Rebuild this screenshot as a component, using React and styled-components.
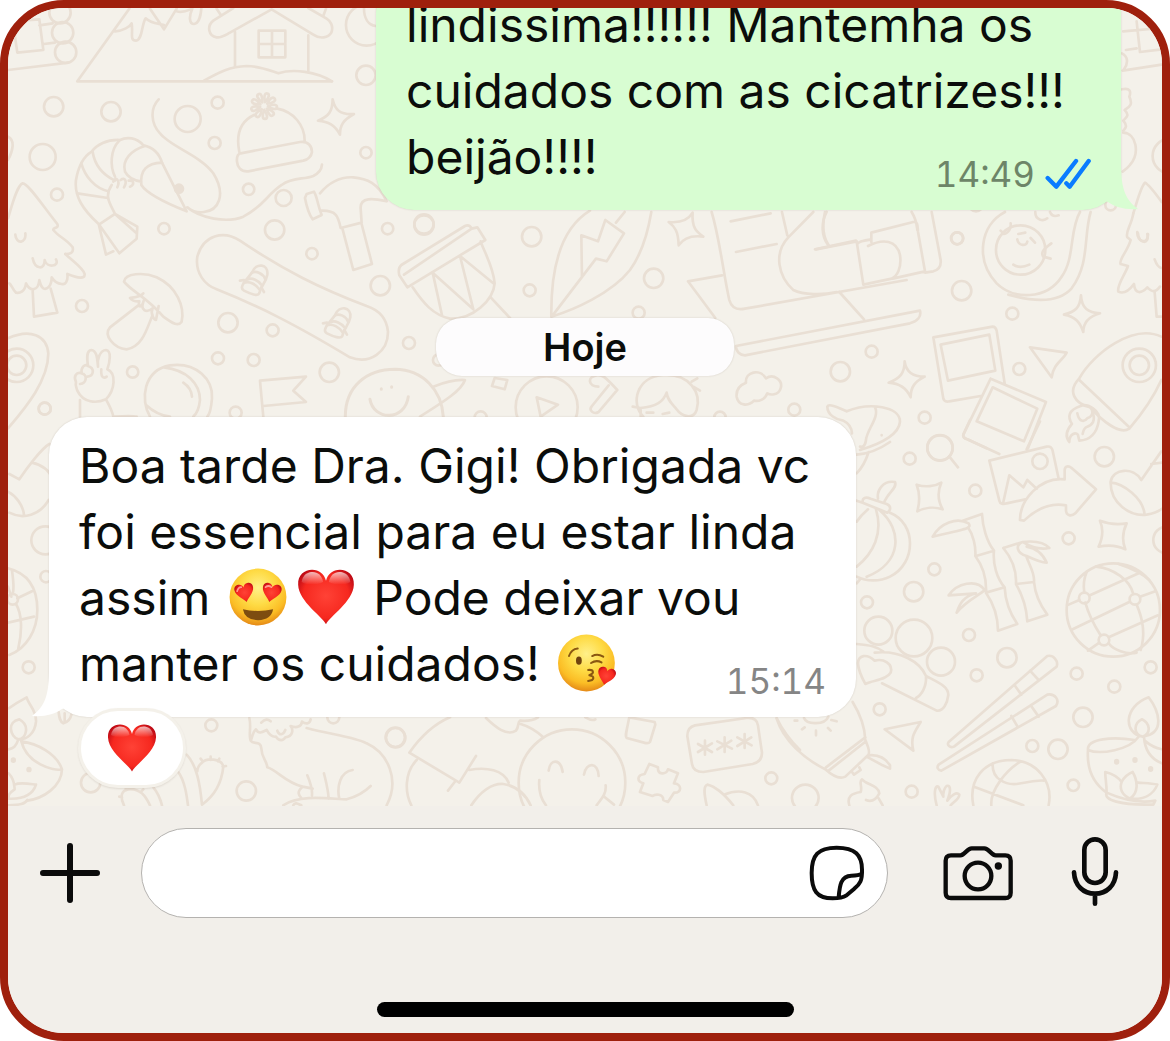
import React from 'react'
import styled, { createGlobalStyle } from 'styled-components'

const GlobalStyle = createGlobalStyle`
  * {
    box-sizing: border-box;
  }
  body {
    margin: 0;
    background: #fff;
    font-family: Inter, "Liberation Sans", sans-serif;
    color: #0b0d0b;
  }
`
const Phone = styled.main`
  display: flex;
  flex-direction: column;
  width: 100%;
  height: 100vh;
  overflow: hidden;
  border: 8px solid #9f200d;
  border-radius: 64px;
  background: #f2efea;
`
const Chat = styled.section`
  position: relative;
  flex: 1;
  min-height: 0;
  display: flex;
  flex-direction: column;
  justify-content: flex-end;
  overflow: hidden;
  padding: 0 41px 18px;
  background: #f4f1ea;
`
const Wallpaper = styled.svg`
  position: absolute;
  top: 0;
  left: 0;
  width: 100%;
  height: 100%;
  fill: none;
  stroke: #e9dfd4;
  stroke-width: 8;
  stroke-linecap: round;
  stroke-linejoin: round;
`
const Bubble = styled.article`
  position: relative;
  display: grid;
  flex-shrink: 0;
  width: 100%;
  max-width: ${(props) => props.$sent ? '745px' : '807px'};
  align-self: ${(props) => props.$sent ? 'flex-end' : 'flex-start'};
  padding: 16px 30px 20px;
  border-radius: 38px;
  background: ${(props) => props.$sent ? '#d8fdd2' : '#fff'};
  box-shadow: 0 0 2px rgba(80, 60, 40, 0.2);
`
const TailShape = styled.svg`
  position: absolute;
  bottom: 0;
  ${(props) => props.$sent ? 'right: -17px;' : 'left: -17px;'}
  width: 44px;
  height: 48px;
  fill: ${(props) => props.$sent ? '#d8fdd2' : '#fff'};
  transform: ${(props) => props.$sent ? 'none' : 'scaleX(-1)'};
`
const Text = styled.p`
  grid-area: 1 / 1;
  margin: 0;
  font-size: 48px;
  line-height: 66px;
`
const Meta = styled.div`
  grid-area: 1 / 1;
  align-self: end;
  justify-self: end;
  display: flex;
  align-items: center;
  gap: 10px;
  height: 32px;
  font-size: 35px;
  font-variant-numeric: tabular-nums;
  line-height: 32px;
  color: ${(props) => props.$sent ? '#6d8568' : '#858585'};
`
const DayLabel = styled.div`
  position: relative;
  flex-shrink: 0;
  align-self: center;
  width: 298px;
  margin: 108px 0 41px;
  border-radius: 26px;
  background: #fdfcfd;
  box-shadow: 0 0 2px rgba(80, 60, 40, 0.2);
  text-align: center;
  font-size: 38px;
  font-weight: 600;
  line-height: 58px;
`
const Reaction = styled.button`
  position: relative;
  display: flex;
  flex-shrink: 0;
  align-items: center;
  justify-content: center;
  width: 108px;
  height: 80px;
  margin: -9px 0 0 29px;
  padding: 0;
  border: 3px solid #f4f1ea;
  border-radius: 40px;
  background: #fff;
  box-shadow: 0 1px 2px rgba(80, 60, 40, 0.12);
`
const Emoji = styled.svg`
  width: ${(props) => props.$size || 58}px;
  height: ${(props) => props.$size || 58}px;
  margin: ${(props) => props.$size ? '0' : '0 5px'};
  vertical-align: ${(props) => props.$size ? 'middle' : '-11px'};
`
const Composer = styled.form`
  display: flex;
  flex-direction: column;
  align-items: center;
  padding: 22px 0 16px;
  background: #f2efea;
`
const ComposerRow = styled.div`
  display: flex;
  align-items: center;
  gap: 41px;
  width: 100%;
  margin-bottom: 84px;
  padding: 0 42px 0 32px;
`
const Field = styled.div`
  display: flex;
  flex: 1;
  align-items: center;
  min-width: 0;
  height: 90px;
  padding: 0 21px 0 32px;
  border: 1px solid #b4b2af;
  border-radius: 50px;
  background: #fff;
`
const Input = styled.input`
  flex: 1;
  min-width: 0;
  height: 66px;
  border: 0;
  outline: 0;
  background: transparent;
  font: inherit;
  font-size: 48px;
`
const Tools = styled.div`
  display: flex;
  align-items: center;
  gap: 56px;
  padding-left: 13px;
`
const IconButton = styled.button`
  display: flex;
  padding: 0;
  border: 0;
  background: none;
  color: #0b0b0b;
`
const Icon = styled.svg`
  width: ${(props) => props.$w}px;
  height: ${(props) => props.$h}px;
  fill: none;
  stroke: currentColor;
  stroke-linecap: round;
  stroke-linejoin: round;
`
const HomeBar = styled.div`
  width: 417px;
  max-width: 60%;
  height: 15px;
  border-radius: 8px;
  background: #000;
`

// wallpaper pieces are drawn three times their size
const Patch = ({ x, y, dots = [], children }) => (
  <g transform={`translate(${x} ${y}) scale(0.3333)`}>
    {dots.map(([cx, cy, r]) => <circle key={`${cx}-${cy}-${r}`} cx={cx} cy={cy} r={r} />)}
    {children}
  </g>
)

const Binding = ({ x, y }) => (
  <g transform={`translate(${x} ${y})`}>
    <path d="M8 24C20 -8 58 -2 54 30C50 54 34 64 30 86C26 96 4 88 -16 78C-26 72 -22 64 -16 54Z" />
    <path d="M8 24C20 18 42 26 48 44M-4 44C8 38 28 48 36 60M-16 54C2 48 20 60 30 74M-28 48L-16 46M36 68L44 82" />
  </g>
)

const Doodles = () => (
  <Wallpaper viewBox="8 8 1154 798" preserveAspectRatio="xMidYMin slice" aria-hidden="true">
    <Patch
      x={0}
      y={0}
      dots={[
        [180, 38, 32], [188, 98, 32], [197, 157, 32], [1100, 75, 62], [1098, 226, 29],
        [161, 320, 29], [333, 335, 29], [563, 357, 39], [653, 308, 18], [644, 429, 18],
        [128, 471, 39], [171, 584, 18], [492, 686, 17], [746, 568, 17], [851, 594, 24],
        [824, 690, 29], [936, 761, 17], [1098, 458, 17], [1163, 686, 17]
      ]}
    >
      <path d="M24 64L118 58L130 150L52 158L42 90M118 76L158 70M132 132L165 128M24 210L205 188" />
      <path d="M388 26L232 244H996M450 26L492 88L530 26M345 94C370 92 390 80 395 70C400 100 388 122 408 122C428 120 425 70 437 55C455 72 475 70 492 75M530 34C550 40 562 32 577 26C566 50 568 72 582 72C598 70 603 40 604 26" />
      <path d="M705 96V200M925 106V212M650 26L662 44M978 26L970 48M700 24L640 62C620 78 625 108 650 112C665 114 675 106 690 98L815 28L940 104C960 118 985 114 994 98C1002 78 990 62 980 56L925 24" />
      <path d="M776 92H856V172H776ZM816 92V172M776 132H856M612 242C660 215 690 200 740 198C780 198 810 212 835 220C880 205 950 215 996 244M1092 24C1092 55 1105 75 1127 78" />
      <path d="M476 298C450 325 452 370 480 400C510 440 600 465 640 520C680 585 655 632 612 636C590 640 570 630 562 622C600 655 680 670 730 650C790 620 800 585 845 555C880 530 910 540 940 528C960 518 965 508 966 494" />
      <path d="M718 456C705 390 730 360 762 345M832 326C880 335 915 375 914 424M722 460L900 426C925 422 936 440 936 456C934 470 925 478 910 482L745 514C722 516 712 500 711 484C710 470 714 462 722 460Z" />
      {[0, 40, 80, 120, 160, 200, 240, 280, 320].map((a) => (
        <path key={a} d="M792 306C783 290 784 279 792 279C800 279 801 290 792 306" transform={`rotate(${a + 15} 792 318)`} />
      ))}
      <path d="M998 298C1005 330 1020 345 1062 342C1030 360 1020 375 1020 404C1005 375 985 365 954 362C985 350 998 335 998 298Z" />
      <path d="M486 488C475 450 450 440 430 436C410 412 380 410 360 420C320 418 290 435 275 455C250 470 235 500 228 540C222 590 250 630 296 672L318 764L340 754M296 672L358 760L410 716L412 680L345 642M345 642L408 698M300 672L345 642C330 610 312 590 335 555" />
      <path d="M244 490C255 530 285 565 325 574M278 456C285 500 310 525 345 542M358 422C330 450 330 500 345 530M434 438C395 450 365 480 375 515C385 535 405 542 424 545M232 580L324 594M486 488C440 490 420 510 424 555C440 580 500 610 560 634L486 488M340 545C345 528 362 540 352 562M362 540C376 530 382 545 372 562M386 542C405 540 402 556 390 560" />
      <circle cx="537" cy="566" r="12" fill="#e9dfd4" />
      <path d="M960 580C985 550 1020 530 1060 532C1100 535 1135 550 1160 604C1120 595 1080 590 1082 625L1085 668L1022 684C1015 650 1010 630 962 632M920 582L942 575C952 590 950 605 965 645L938 658C925 640 918 610 915 594ZM1028 688L1060 810L1116 792L1085 672" />
      <path d="M24 655C35 620 50 558 68 550C85 550 130 620 172 672C178 688 158 680 160 690C178 712 200 718 218 742C222 760 210 762 196 762M46 704C48 735 80 730 76 700M24 410C45 420 40 450 24 480" />
    </Patch>

    <Patch
      x={0}
      y={220}
      dots={[
        [684, 308, 29], [818, 331, 18], [246, 258, 18], [1141, 197, 29], [1227, 369, 18],
        [654, 415, 18], [761, 420, 18], [988, 457, 29], [398, 456, 17], [134, 566, 18],
        [707, 578, 18], [1272, 12, 29], [50, 436, 50], [50, 436, 29], [1316, 420, 17]
      ]}
    >
      <path d="M196 102C220 125 250 145 254 162C255 178 235 175 202 162C205 185 195 195 185 192C165 190 160 180 155 172C155 200 140 210 130 205C122 200 120 188 118 180C115 215 90 215 78 190C75 215 60 220 48 218C38 210 35 195 28 190M98 212L102 290L172 278L152 206M98 115C105 150 135 150 134 120C140 145 180 140 168 118" />
      <path d="M372 185C375 160 430 155 470 172C530 200 555 260 545 305C535 320 520 312 490 290C440 230 395 215 372 185ZM418 254L330 322C310 345 340 385 380 388C430 380 442 320 458 285M430 220C420 232 400 232 390 234C398 244 405 245 418 244C412 262 425 268 432 240C418 272 440 280 458 265C450 280 462 300 468 300L476 258" />
      <path d="M720 62C670 30 610 45 592 110C585 160 615 195 650 208C780 260 880 310 1050 412C1110 435 1165 395 1164 335C1160 290 1130 268 1100 258C960 205 850 150 720 62Z" />
      <Binding x={748} y={134} />
      <Binding x={997} y={262} />
      <path d="M24 355C90 325 140 345 145 400C145 480 80 560 24 625" />
      <path d="M294 440C290 420 300 390 318 390C335 392 330 425 322 448C350 460 345 510 318 538C290 550 250 550 232 512C228 500 225 495 228 486C220 470 228 455 245 460C242 442 255 430 264 438C260 410 260 392 274 390C292 392 292 420 294 440M304 448C302 470 310 478 320 470M245 460C262 462 262 490 240 492M264 438C285 445 282 468 262 470M240 540V590M318 538C330 560 338 575 340 590C370 588 395 586 410 590" />
      <path d="M450 590C420 540 430 450 510 436C590 425 640 480 636 535C634 560 632 580 622 590M492 442C560 450 600 490 600 540C598 560 592 580 580 590M438 555C465 580 490 588 510 590M550 488C565 498 575 515 576 530" />
      <path d="M790 590L780 482L918 470L880 512L918 546L790 558" />
      <path d="M1036 590C1036 500 1100 448 1185 448C1270 450 1325 510 1330 590M1110 538C1120 602 1215 605 1225 530M1144 506V508M1175 500V502" strokeWidth="9" />
      <path d="M1300 500C1330 488 1370 478 1395 480C1385 510 1340 540 1260 590" />
    </Patch>

    <Patch
      x={430}
      y={200}
      dots={[
        [305, 110, 29], [299, 271, 18], [671, 235, 29], [626, 338, 18], [350, 622, 93],
        [1093, 629, 18], [152, 652, 18], [870, 652, 17], [-18, 75, 29]
      ]}
    >
      <path d="M-86 195L105 78C115 74 122 80 125 86L142 82L166 120L-68 262L-92 226C-96 210 -94 202 -86 195ZM-78 224L125 86M-52 262C-20 310 10 345 60 356C130 358 190 300 194 250C190 200 160 150 152 124M8 218L36 346M8 218L130 328L90 168L190 250M182 292L240 354" />
      <path d="M480 32C400 80 362 190 364 350C430 330 545 280 600 210C640 155 655 90 664 36M368 346L498 176L530 184L582 100L526 60L504 124L454 106L456 232M558 68L584 36" />
      <path d="M788 38C785 85 800 95 820 110C785 105 760 115 746 136C745 95 735 80 716 66C755 70 775 60 788 38Z" />
      <path d="M845 36C870 120 880 220 898 300C905 325 925 330 945 326L1430 240M902 64L1022 40M918 156L1040 132M876 226L774 244L856 354M1056 36L1072 106M1150 36L1075 112C1030 160 1045 230 1090 270C1120 285 1180 285 1220 276M918 438L1470 332C1475 350 1462 364 1440 370L945 466C930 466 918 455 918 438ZM1185 36C1175 80 1180 110 1195 134M1155 148L1278 122" />
      <path d="M320 592L384 614L332 650ZM194 534L232 540L224 568L186 558ZM505 560C475 560 470 530 500 526C515 522 525 530 562 570L506 636C490 645 475 630 486 618L536 556" />
      <path d="M640 650C600 610 620 530 700 525C780 520 815 580 800 630C790 660 755 650 740 628C725 610 712 600 710 578C700 605 680 620 632 624M608 620L632 624V650M650 638H670M698 642L718 638M785 545L802 535M790 560L810 572" />
      <path d="M948 548C945 515 990 505 1008 535C1030 520 1060 540 1052 565C1045 588 1020 585 1012 580C1005 600 985 605 972 602C955 620 925 618 920 590C918 570 930 555 948 548Z" />
    </Patch>

    <Patch
      x={770}
      y={0}
      dots={[[1200, 468, 52], [562, 715, 18], [1022, 615, 16], [618, 612, 22]]}
    >
      <path d="M1060 94L1175 84M1100 64L1110 156L1175 148M1068 150L1100 145M1058 212L1175 194M1056 160C1075 170 1075 190 1062 208M1056 268C1080 262 1084 275 1078 290C1090 315 1078 320 1064 330C1080 348 1070 350 1060 362C1075 380 1065 385 1060 392M1060 398C1100 400 1110 460 1080 495C1072 505 1065 510 1058 515" />
      <path d="M1090 640C1100 610 1112 560 1125 548C1138 555 1160 585 1175 606M1102 696C1100 728 1136 735 1134 702" />
    </Patch>

    <Patch
      x={800}
      y={200}
      dots={[
        [471, 115, 18], [485, 272, 29], [637, 341, 18], [215, 455, 18], [121, 515, 29],
        [658, 507, 18], [374, 653, 18], [1018, 496, 50], [1018, 496, 29], [420, 743, 38],
        [662, 150, 74]
      ]}
    >
      <path d="M80 36C62 70 65 110 84 134M48 148L170 124L190 254M172 132C175 124 200 120 214 118M214 126V98L340 66C355 64 352 78 354 95L375 214L278 236M335 36C350 60 350 75 352 90M204 138C250 115 290 120 300 165C306 205 290 230 275 236L190 254M395 36L422 180C424 200 415 210 400 214L375 218M118 276L192 358" />
      <path d="M615 36C540 75 525 180 590 250C640 300 740 300 785 230C825 175 808 90 840 36M872 36C850 110 870 190 815 265C775 310 700 305 625 284M706 36C705 60 730 65 742 55M750 36C755 48 765 50 776 46M652 118C655 138 680 140 682 125M655 102L676 98M692 114L705 128M640 194C655 204 675 200 688 194M602 92L612 102C625 100 634 86 632 70M754 130C735 145 720 155 730 170L752 176" />
      <path d="M843 286C845 325 865 338 900 340C865 350 850 370 850 396C840 365 825 350 792 344C825 335 840 325 843 286ZM314 484C318 515 340 530 374 530C345 545 332 560 332 592C320 565 300 550 266 548C300 535 314 520 314 484Z" />
      <path d="M1000 40C995 75 975 95 982 112L992 120C985 150 955 180 962 192L984 198C975 225 950 255 955 275C970 282 985 275 1002 252C1005 285 1025 280 1042 262C1055 275 1065 280 1080 260M1064 276L1070 350H1084M1064 178C1070 195 1075 202 1084 204M1014 100C1015 132 1050 135 1042 102" />
      <path d="M590 392C588 385 585 380 578 380L400 412L430 596C432 604 440 606 448 604L542 588M590 392L614 550M422 434L568 404L586 512L444 542ZM572 536L738 606L684 745M572 536L490 704C490 712 495 716 502 718L560 745M578 562L712 626L672 724L530 664Z" />
      <path d="M690 442L800 458C790 480 760 490 755 532ZM1084 410C1000 370 880 460 838 535C800 575 825 610 870 622C910 665 960 705 988 686C1010 660 1055 605 1084 540M838 540L988 682" />
      <path d="M896 665C905 630 860 610 842 618C805 630 802 650 816 672C800 690 795 710 808 726C808 700 830 695 834 705L838 722C870 720 890 700 896 665ZM832 640C838 670 855 665 862 655C875 650 880 640 876 630C890 665 875 675 862 680C850 685 850 695 848 702" />
      <path d="M140 634C210 605 300 620 300 665C298 700 250 730 180 750M140 634C110 620 85 610 82 620C82 645 110 660 130 662C150 672 155 685 156 700M225 622C240 650 200 690 198 720C195 740 188 742 180 740M245 705V706" />
    </Patch>

    <Patch
      x={840}
      y={420}
      dots={[
        [300, 84, 38], [209, 116, 18], [406, 212, 18], [600, 124, 23], [793, 110, 29],
        [686, 355, 18], [283, 448, 18], [221, 515, 29], [81, 547, 18], [387, 645, 18],
        [501, 713, 29], [115, 632, 42], [222, 654, 55], [303, 725, 42], [410, 766, 18],
        [710, 761, 18], [932, 742, 18], [823, 800, 18], [119, 868, 18], [729, 892, 29],
        [577, 978, 18], [654, 988, 29], [700, 1096, 17], [215, 1115, 18], [820, 570, 140],
        [733, 534, 16], [885, 538, 16], [792, 660, 16], [980, 360, 40]
      ]}
    >
      <path d="M330 112L354 142M50 104C100 100 130 80 150 66M86 96C75 130 60 150 50 160M600 4L560 88M390 0L370 44C368 52 375 56 382 58L478 102" />
      <path d="M448 122L620 80C630 78 636 84 638 92L656 176M448 122L478 242C480 252 490 254 500 250L556 238M490 246L508 166L550 202L562 180L590 206" />
      <path d="M540 300C540 240 600 170 674 178V150C675 138 685 136 695 144L768 208L706 280C695 290 678 288 678 270V256C620 245 575 280 552 302Z" />
      <path d="M230 194C255 202 285 200 304 188C292 215 295 245 308 268C285 260 255 262 232 274C240 245 240 220 230 194ZM780 302C810 314 835 314 860 310C848 335 845 360 856 388C830 375 800 375 776 380C790 350 790 325 780 302Z" />
      <path d="M964 94L904 180C880 140 820 145 812 185C810 250 870 290 920 284C945 280 955 275 966 266M812 188C850 190 910 235 914 284M934 132L966 128" />
      <path d="M50 242L68 248C66 232 78 230 92 236L140 252C155 258 152 272 142 278L68 248M114 236C110 210 130 180 165 186C172 205 145 215 132 248M150 278C230 310 230 430 150 470C120 485 80 485 50 470M108 268C130 340 100 400 50 440M118 270C190 330 185 430 80 470M84 268C70 280 60 290 50 305M50 490L60 478" />
      <path d="M368 302L426 282C428 320 440 365 462 392C458 430 470 475 494 502C496 545 510 580 532 612L474 632C474 590 460 550 438 518C440 480 430 440 406 408C408 380 400 345 384 322M408 408L462 392M438 518L494 502M278 350C300 310 350 290 386 310C395 325 385 325 278 350ZM326 526C350 490 410 475 434 510C420 525 380 540 350 578C360 550 370 530 408 520L326 526" />
      <path d="M490 384L548 366C600 360 620 375 628 384C600 390 570 380 548 366C525 375 530 400 560 408C590 422 605 428 620 428C610 405 590 385 560 380M490 384C520 420 530 455 528 492C550 530 560 570 562 604L622 584C600 555 585 520 582 486C585 460 570 440 560 412M528 492L582 486" />
      <path d="M740 456C730 480 730 500 733 518M768 440C820 445 870 480 880 522M686 554L718 540M750 526L896 460M736 548C745 580 765 620 782 646M698 628L868 546M900 530L946 514M890 554C910 600 915 650 902 690M806 652L954 586M744 692L778 668M806 670C820 690 860 705 890 698M836 432C860 440 900 455 928 480" />
      <path d="M50 672C90 675 110 680 130 695M104 698C180 690 240 725 258 768C300 790 325 800 325 825C322 850 310 875 290 872L126 790M258 768C260 800 245 825 228 834M54 730C55 705 80 700 104 722C130 715 160 730 152 758C140 780 100 780 76 792C64 770 55 750 54 730Z" />
      <path d="M622 708C640 704 656 722 650 740L342 980C330 985 320 975 326 966ZM570 752L596 780M524 796L544 824M622 824C645 820 660 840 648 858L304 1052C292 1050 290 1042 296 1034ZM572 856L596 890M514 888L534 922" />
      <path d="M134 928L242 906C225 935 210 950 220 992ZM400 1156C385 1080 430 1020 515 1020C590 1022 640 1085 626 1156M402 1100L550 1156M458 1030C455 1080 500 1095 530 1092C570 1085 600 1080 612 1082M540 1026C500 1050 450 1110 454 1156" />
      <path d="M290 1156C280 1120 285 1095 295 1100L310 1130C308 1110 320 1090 328 1100C335 1115 325 1130 322 1142C335 1125 350 1115 358 1124C358 1138 340 1145 332 1156M28 1156C20 1130 35 1120 62 1116C68 1100 55 1085 66 1078C80 1095 115 1095 118 1120C105 1145 90 1145 78 1140M116 1135L128 1156" />
      <path d="M926 832C955 870 980 940 908 950C850 940 850 860 926 832ZM908 950C880 945 880 910 906 898C930 910 935 940 908 950M896 950C870 990 780 1005 744 990C740 955 820 950 884 960M912 950C915 1000 940 1020 966 1030M914 962C935 980 950 985 966 988M744 990C740 1050 760 1090 800 1118C790 1140 840 1156 940 1154L946 1142C900 1150 850 1140 800 1118C800 1090 795 1070 796 1056C820 1062 835 1072 845 1086C850 1075 865 1060 878 1056C895 1085 895 1120 870 1136C845 1125 838 1105 845 1086M894 1088C920 1090 935 1090 952 1094C940 1125 910 1140 870 1136" />
      <path d="M830 1024V1026M885 1019V1021M932 1046V1048" strokeWidth="16" />
    </Patch>

    <Patch
      x={0}
      y={400}
      dots={[[134, 26, 18], [136, 421, 42], [138, 530, 17], [86, 802, 18]]}
    >
      <path d="M148 132C125 145 80 205 58 238L28 222M96 188C130 195 150 215 160 240M24 275C45 285 70 315 72 346M28 338C70 360 120 345 146 300M24 505C85 520 112 565 112 630C112 690 80 745 28 765M36 512C40 540 42 570 38 582M52 595L96 574M24 560L34 590M48 612C65 640 68 690 55 745M24 668L102 650" />
      <circle cx="38" cy="598" r="16" />
    </Patch>

    <Patch
      x={0}
      y={680}
      dots={[[634, 136, 18], [272, 308, 29], [739, 333, 29], [1187, 173, 29], [1000, 112, 18]]}
    >
      <path d="M26 85C50 68 65 60 80 52C85 75 110 90 108 125C105 160 80 180 55 178C30 170 20 125 58 118C90 135 80 175 55 178C48 200 40 205 26 208M64 184C110 190 170 220 186 268C160 275 80 250 64 184ZM186 268C185 320 130 355 82 362M26 280C45 300 42 315 44 328C25 340 26 345 26 350M44 314C60 306 90 312 108 314C98 345 70 358 26 356M26 376C60 375 75 372 82 360M176 96C178 115 180 125 190 130C205 125 212 115 214 104M194 100V126" />
      <path d="M40 240V241M87 268V269" strokeWidth="16" />
      <path d="M372 376C355 340 370 325 400 328C430 335 440 355 450 376M358 350L366 352M376 322L380 330M400 318V326M430 328L424 334M460 322C475 340 482 360 486 376M535 276C555 305 560 345 564 376M560 224C590 255 600 310 606 374C640 350 665 310 670 260C665 235 620 232 604 250C595 258 592 265 592 274M602 236L608 244M632 230V240M658 236L654 244M668 260L678 258" />
      <path d="M748 114C755 140 745 165 752 182C760 195 782 180 784 205C785 235 800 240 802 262C830 270 860 310 908 320C890 335 895 345 905 355M752 182C760 165 755 160 768 148C775 165 790 155 800 150C808 165 815 172 828 170C838 185 850 182 856 172C880 170 880 148 872 138C890 145 905 140 906 125C920 135 930 130 932 118M784 128C795 115 805 118 812 124M832 152C838 168 850 165 856 150M920 144C1000 165 1060 170 1100 190C1165 220 1200 300 1160 376M908 320L938 326M922 286C930 305 938 325 936 346M972 280C978 305 985 330 986 356M1058 270C1020 275 1010 320 1018 356M850 376C900 340 1000 358 1040 358C1070 350 1090 340 1112 318M880 376C885 365 895 372 904 376" />
    </Patch>

    <Patch x={400} y={700} dots={[[516, 248, 160], [-14, 112, 29], [1114, 235, 18], [1216, 294, 40]]}>
      <path d="M150 52C95 75 55 120 28 158L178 248L228 168M164 246L144 272M50 180C12 220 15 280 34 316M208 210C260 200 310 210 326 248M214 316C240 275 275 250 310 252C350 258 375 280 392 316M258 54C285 80 320 110 348 92C358 80 352 66 360 62C385 64 405 58 414 52M362 72C390 80 415 98 430 112M556 52C570 60 580 62 586 58" />
      <path d="M446 212C450 175 482 175 488 216M552 224C558 185 595 185 596 228M418 240C415 275 425 300 438 316M617 256C620 285 600 300 590 316M610 288L642 314" />
      <path d="M688 52L764 66L766 74L750 126C745 132 740 130 732 128L680 114C675 108 678 100 688 52ZM885 76L1040 54C1062 52 1072 62 1074 76L1086 158C1086 178 1075 188 1058 192L910 216C886 216 878 205 876 192L862 108C862 90 868 80 885 76Z" />
      <path d="M915 122V164M894 132L936 156M936 130L894 156M974 112V156M952 124L996 146M994 122L952 148M1034 102V144M1012 112L1055 136M1054 112L1012 138" />
      <path d="M748 192L774 202C772 225 800 225 804 208L834 220L822 250C845 250 848 280 822 278L804 306L790 300C790 280 765 282 758 288L720 276L730 250C710 245 710 225 734 222ZM920 316C912 280 910 258 922 254C950 260 975 285 1000 316M972 284C1020 265 1060 275 1074 316M1130 54C1145 85 1170 120 1200 150" />
    </Patch>

    <Patch x={700} y={640}>
      <path d="M230 236C250 300 310 355 376 388C400 410 420 418 436 410L504 346M458 186C485 230 495 270 496 300C505 320 510 340 504 346M378 382L496 292M386 392L498 304M504 346C540 342 560 360 570 376V386L548 376L504 352M456 396L462 404L482 390L478 382M312 234C320 255 375 255 385 230M284 242H292M306 268L314 262M348 272V286M384 264L392 272M394 240L410 244" />
    </Patch>
  </Wallpaper>
)

const HEART = 'M50 97C44 84 3 58 2 29C1 12 13 3 26 3C38 3 47 10 50 22C53 10 62 3 74 3C87 3 99 12 98 29C97 58 56 84 50 97Z'

const Gradients = ({ id }) => (
  <defs>
    <radialGradient id={`${id}-face`} cx="50%" cy="34%" r="66%">
      <stop offset="0" stopColor="#fff08a" />
      <stop offset="0.45" stopColor="#fedb45" />
      <stop offset="0.78" stopColor="#fbbd25" />
      <stop offset="1" stopColor="#e58a17" />
    </radialGradient>
    <radialGradient id={`${id}-heart`} cx="50%" cy="48%" r="58%">
      <stop offset="0" stopColor="#ff4236" />
      <stop offset="0.7" stopColor="#f6281f" />
      <stop offset="1" stopColor="#bd0a15" />
    </radialGradient>
    <linearGradient id={`${id}-shine`} x1="0" y1="0" x2="0" y2="1">
      <stop offset="0" stopColor="#fff" stopOpacity="0.7" />
      <stop offset="1" stopColor="#fff" stopOpacity="0" />
    </linearGradient>
  </defs>
)

const HeartEmoji = ({ id, size }) => (
  <Emoji $size={size} viewBox="0 0 100 100" role="img" aria-label="❤️">
    <Gradients id={id} />
    <path d={HEART} fill={`url(#${id}-heart)`} />
    <path d="M8 24C10 11 19 7 27 7C36 7 43 13 45 24C32 30 18 30 8 24Z" fill={`url(#${id}-shine)`} />
    <path d="M55 24C57 13 64 7 73 7C81 7 90 11 92 24C82 30 68 30 55 24Z" fill={`url(#${id}-shine)`} />
  </Emoji>
)

const HeartEyes = () => (
  <Emoji viewBox="0 0 100 100" role="img" aria-label="😍">
    <Gradients id="eyes" />
    <circle cx="50" cy="50" r="49" fill="url(#eyes-face)" />
    <path d="M24 71Q50 77 76 71Q73 89 50 90Q27 89 24 71Z" fill="#7d4c10" />
    <path d={HEART} fill="url(#eyes-heart)" transform="translate(10 26) rotate(-12 17 17) scale(0.34)" />
    <path d={HEART} fill="url(#eyes-heart)" transform="translate(56 26) rotate(12 17 17) scale(0.34)" />
    <path d="M14 40Q16 33 21 33M63 33Q68 29 73 33" fill="none" stroke="#ff9a92" strokeWidth="3" strokeLinecap="round" />
  </Emoji>
)

const KissEmoji = () => (
  <Emoji viewBox="0 0 100 100" role="img" aria-label="😘">
    <Gradients id="kiss" />
    <circle cx="49" cy="50" r="49" fill="url(#kiss-face)" />
    <ellipse cx="36" cy="46" rx="5" ry="7" fill="#70430e" />
    <g fill="none" stroke="#8a5711" strokeWidth="3.5" strokeLinecap="round" strokeLinejoin="round">
      <path d="M19 38Q23 26 34 25M59 38Q68 33 78 39M57 50Q66 44 75 49" />
      <path d="M52 62C61 61 64 67 54 71C64 73 63 80 52 81" />
    </g>
    <path d={HEART} fill="url(#kiss-heart)" transform="translate(67 57) rotate(14 16 16) scale(0.32)" />
  </Emoji>
)

const Tail = ({ sent }) => (
  <TailShape $sent={sent} viewBox="0 0 44 48" aria-hidden="true">
    <path d="M6 0H27C27 24 30 37 44 47C31 48 21 45 14 40L0 36Z" />
  </TailShape>
)

const ReadTicks = () => (
  <Icon $w={46} $h={32} viewBox="0 0 138 96" color="#0a7cff" strokeWidth="13" role="img" aria-label="Lida">
    <path d="M8 60L34 86L93 9M64 76L74 86L131 9" />
  </Icon>
)

const App = () => (
  <>
    <GlobalStyle />
    <Phone>
      <Chat>
        <Doodles />
        <Bubble $sent>
          <Tail sent />
          <Text>
            lindissima!!!!!! Mantemha os<br />
            cuidados com as cicatrizes!!!<br />
            beijão!!!!
          </Text>
          <Meta $sent>
            <time>14:49</time>
            <ReadTicks />
          </Meta>
        </Bubble>
        <DayLabel>Hoje</DayLabel>
        <Bubble>
          <Tail />
          <Text>
            Boa tarde Dra. Gigi! Obrigada vc<br />
            foi essencial para eu estar linda<br />
            assim <HeartEyes /><HeartEmoji id="inline" /> Pode deixar vou<br />
            manter os cuidados! <KissEmoji />
          </Text>
          <Meta>
            <time>15:14</time>
          </Meta>
        </Bubble>
        <Reaction type="button" aria-label="Reação">
          <HeartEmoji id="reaction" size={50} />
        </Reaction>
      </Chat>
      <Composer onSubmit={(e) => e.preventDefault()}>
        <ComposerRow>
          <IconButton type="button" aria-label="Anexar">
            <Icon $w={60} $h={60} viewBox="0 0 60 60" strokeWidth="6">
              <path d="M30 3V57M3 30H57" />
            </Icon>
          </IconButton>
          <Field>
            <Input type="text" aria-label="Mensagem" />
            <IconButton type="button" aria-label="Figurinhas">
              <Icon $w={58} $h={58} viewBox="326 613 174 174" strokeWidth="12">
                <path d="M400 776C352 776 337 752 337 700C337 646 356 624 412 624C468 624 488 646 488 690C489 722 482 734 465 747L440 768C430 775 416 776 400 776ZM418 772C421 738 424 709 456 708C472 708 480 707 487 702" />
              </Icon>
            </IconButton>
          </Field>
          <Tools>
            <IconButton type="button" aria-label="Câmera">
              <Icon $w={72} $h={58} viewBox="727 611 216 174" strokeWidth="13">
                <path d="M754 645H782C796 645 802 624 816 624H854C868 624 874 645 888 645H917C928 645 933 651 933 661V757C933 768 928 773 917 773H754C743 773 738 768 738 757V661C738 651 743 645 754 645Z" />
                <circle cx="835" cy="707" r="40" />
                <circle cx="896" cy="677" r="11" fill="currentColor" stroke="none" />
              </Icon>
            </IconButton>
            <IconButton type="button" aria-label="Gravar áudio">
              <Icon $w={50} $h={72} viewBox="1110 590 150 216" strokeWidth="14">
                <rect x="1153" y="597" width="64" height="131" rx="32" />
                <path d="M1122 696C1124 736 1150 760 1185 760C1220 760 1246 736 1248 696M1185 762V790" />
              </Icon>
            </IconButton>
          </Tools>
        </ComposerRow>
        <HomeBar />
      </Composer>
    </Phone>
  </>
)

export default App
